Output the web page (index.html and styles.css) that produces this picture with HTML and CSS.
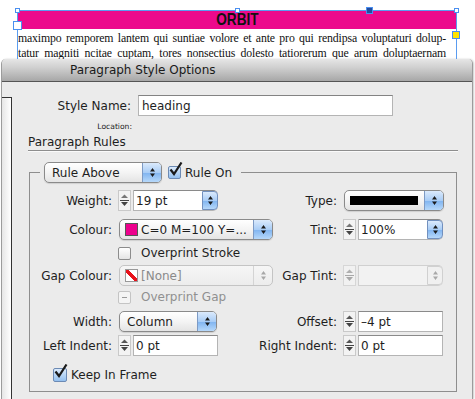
FILE: index.html
```html
<!DOCTYPE html>
<html lang="en">
<head>
<meta charset="utf-8">
<title>Paragraph Style Options</title>
<link rel="stylesheet" href="styles.css">
</head>
<body>
<div class="doc">
    <div class="frame">
        <div class="head"><span class="head-text">ORBIT</span></div>
        <p class="copy">
            <span class="line">maximpo remporem lantem qui suntiae volore et ante pro qui rendipsa voluptaturi dolup-</span>
            <span class="line">tatur magniti ncitae cuptam, tores nonsectius dolesto tatiorerum que arum doluptaernam</span>
        </p>
        <!-- selection handles sit on top of the frame -->
        <span class="handle h-tl"></span>
        <span class="handle h-tm"></span>
        <span class="handle h-tr"></span>
        <span class="handle h-in"></span>
        <span class="handle h-anchor"></span>
        <span class="handle h-out"></span>
    </div>
</div>

<div class="dialog">
    <div class="titlebar">Paragraph Style Options</div>
    <div class="dlg-body">
        <div class="list"></div>
        <div class="form">
            <div class="name-row">
                <span class="name-label">Style Name:</span>
                <div class="textfield">heading</div>
            </div>
            <div class="location">Location:</div>
            <div class="section">Paragraph Rules</div>

            <fieldset class="group">
                <legend class="legend">
                    <div class="popup rule-popup">
                        <span class="popup-text">Rule Above</span>
                        <span class="cap"><svg class="arrows" viewBox="0 0 7 11"><path d="M3.5 1 L6 4.5 H1Z M1 6.5 H6 L3.5 10Z"/></svg></span>
                    </div>
                    <span class="check on"><svg class="tick" viewBox="0 0 16 16"><path d="M2.5 7.5 L6 12 L13.5 0.5"/></svg></span>
                    <span class="check-text">Rule On</span>
                </legend>

                <div class="row r-weight">
                    <span class="lbl">Weight:</span>
                    <div class="spin-combo">
                        <svg class="stepper" viewBox="0 0 13 21"><rect x="0.5" y="0.5" width="12" height="20" fill="#f3f3f3" stroke="#c9c9c9"/><path d="M6.5 4.5 L10 8 H3Z" fill="#777"/><path d="M2 10.5 H11" stroke="#444"/><path d="M3 12 H10 L6.5 16Z" fill="#444"/></svg>
                        <div class="combo"><span class="field-text">19 pt</span><span class="cap small"><svg class="arrows" viewBox="0 0 7 11"><path d="M3.5 1 L6 4.5 H1Z M1 6.5 H6 L3.5 10Z"/></svg></span></div>
                    </div>
                    <span class="rlbl">Type:</span>
                    <div class="popup type-popup">
                        <span class="popup-text"><span class="stroke-swatch"></span></span>
                        <span class="cap"><svg class="arrows" viewBox="0 0 7 11"><path d="M3.5 1 L6 4.5 H1Z M1 6.5 H6 L3.5 10Z"/></svg></span>
                    </div>
                </div>

                <div class="row r-colour">
                    <span class="lbl">Colour:</span>
                    <div class="popup colour-popup">
                        <span class="swatch magenta"></span>
                        <span class="popup-text tight">C=0 M=100 Y=...</span>
                        <span class="cap"><svg class="arrows" viewBox="0 0 7 11"><path d="M3.5 1 L6 4.5 H1Z M1 6.5 H6 L3.5 10Z"/></svg></span>
                    </div>
                    <span class="rlbl">Tint:</span>
                    <div class="spin-combo">
                        <svg class="stepper" viewBox="0 0 13 21"><rect x="0.5" y="0.5" width="12" height="20" fill="#f3f3f3" stroke="#c9c9c9"/><path d="M6.5 4.5 L10 8 H3Z" fill="#777"/><path d="M2 10.5 H11" stroke="#444"/><path d="M3 12 H10 L6.5 16Z" fill="#444"/></svg>
                        <div class="combo"><span class="field-text">100%</span><span class="cap small"><svg class="arrows" viewBox="0 0 7 11"><path d="M3.5 1 L6 4.5 H1Z M1 6.5 H6 L3.5 10Z"/></svg></span></div>
                    </div>
                </div>

                <div class="row r-check r-stroke">
                    <span class="check off"></span>
                    <span class="check-text">Overprint Stroke</span>
                </div>

                <div class="row r-gap">
                    <span class="lbl">Gap Colour:</span>
                    <div class="popup colour-popup disabled">
                        <span class="swatch none"></span>
                        <span class="popup-text tight">[None]</span>
                        <span class="cap"><svg class="arrows" viewBox="0 0 7 11"><path d="M3.5 1 L6 4.5 H1Z M1 6.5 H6 L3.5 10Z"/></svg></span>
                    </div>
                    <span class="rlbl">Gap Tint:</span>
                    <div class="spin-combo disabled">
                        <svg class="stepper" viewBox="0 0 13 21"><rect x="0.5" y="0.5" width="12" height="20" fill="#f1f1f1" stroke="#d6d6d6"/><path d="M6.5 4.5 L10 8 H3Z" fill="#b0b0b0"/><path d="M2 10.5 H11" stroke="#a8a8a8"/><path d="M3 12 H10 L6.5 16Z" fill="#a8a8a8"/></svg>
                        <div class="combo"><span class="field-text"></span><span class="cap small"><svg class="arrows" viewBox="0 0 7 11"><path d="M3.5 1 L6 4.5 H1Z M1 6.5 H6 L3.5 10Z"/></svg></span></div>
                    </div>
                </div>

                <div class="row r-check r-ogap">
                    <span class="check mixed"><span class="dash"></span></span>
                    <span class="check-text dim">Overprint Gap</span>
                </div>

                <div class="row r-width">
                    <span class="lbl">Width:</span>
                    <div class="popup width-popup">
                        <span class="popup-text">Column</span>
                        <span class="cap"><svg class="arrows" viewBox="0 0 7 11"><path d="M3.5 1 L6 4.5 H1Z M1 6.5 H6 L3.5 10Z"/></svg></span>
                    </div>
                    <span class="rlbl">Offset:</span>
                    <div class="spin-combo">
                        <svg class="stepper" viewBox="0 0 13 21"><rect x="0.5" y="0.5" width="12" height="20" fill="#f3f3f3" stroke="#c9c9c9"/><path d="M6.5 4.5 L10 8 H3Z" fill="#555"/><path d="M2 10.5 H11" stroke="#444"/><path d="M3 12 H10 L6.5 16Z" fill="#444"/></svg>
                        <div class="field">–4 pt</div>
                    </div>
                </div>

                <div class="row r-indent">
                    <span class="lbl">Left Indent:</span>
                    <div class="spin-combo">
                        <svg class="stepper" viewBox="0 0 13 21"><rect x="0.5" y="0.5" width="12" height="20" fill="#f3f3f3" stroke="#c9c9c9"/><path d="M6.5 4.5 L10 8 H3Z" fill="#555"/><path d="M2 10.5 H11" stroke="#444"/><path d="M3 12 H10 L6.5 16Z" fill="#444"/></svg>
                        <div class="field">0 pt</div>
                    </div>
                    <span class="rlbl">Right Indent:</span>
                    <div class="spin-combo">
                        <svg class="stepper" viewBox="0 0 13 21"><rect x="0.5" y="0.5" width="12" height="20" fill="#f3f3f3" stroke="#c9c9c9"/><path d="M6.5 4.5 L10 8 H3Z" fill="#555"/><path d="M2 10.5 H11" stroke="#444"/><path d="M3 12 H10 L6.5 16Z" fill="#444"/></svg>
                        <div class="field">0 pt</div>
                    </div>
                </div>

                <div class="keep">
                    <span class="check on"><svg class="tick" viewBox="0 0 16 16"><path d="M2.5 7.5 L6 12 L13.5 0.5"/></svg></span>
                    <span class="check-text">Keep In Frame</span>
                </div>
            </fieldset>
        </div>
    </div>
</div>
</body>
</html>
```

FILE: styles.css
```css
* {
    box-sizing: border-box;
}
body {
    margin: 0;
    width: 475px;
    height: 399px;
    overflow: hidden;
    background: #fff;
    color: #1e1e1e;
    font-family: "DejaVu Sans", "Noto Sans", sans-serif;
    font-size: 12px;
}

/* document page behind the dialog */
.doc {
    height: 59px;
    overflow: hidden;
}
.frame {
    position: relative;
    margin: 10px 0 0 17px;
    width: 440px;
    height: 60px;
    border: 1px solid #5a9cf0;
    border-bottom: 0;
}
.head {
    height: 18px;
    background: #ec0a8c;
    text-align: center;
    line-height: 18px;
}
.head-text {
    display: inline-block;
    font-family: "Liberation Sans Narrow", "Liberation Sans", sans-serif;
    font-weight: bold;
    font-size: 17px;
    color: #111;
    transform: scaleX(0.8);
}
.copy {
    margin: 0;
    padding: 2px 10px 0 0;
    font-family: "Liberation Serif", serif;
    font-size: 11.8px;
    letter-spacing: -0.15px;
    line-height: 15px;
    color: #111;
}
.line {
    display: block;
    white-space: nowrap;
    text-align: justify;
    text-align-last: justify;
}
.handle {
    position: absolute;
    width: 5px;
    height: 5px;
    border: 1px solid #4a8ff0;
    background: #fff;
}
.h-tl { left: -3px; top: -3px; }
.h-tm { left: 217px; top: -3px; }
.h-tr { left: 436px; top: -3px; }
.h-in { left: -5px; top: 10px; width: 9px; height: 9px; }
.h-anchor { left: 348px; top: -4px; width: 7px; height: 7px; background: #244c9c; }
.h-out { left: 434px; top: 20px; width: 8px; height: 8px; background: #ffe400; }

/* dialog */
.dialog {
    margin-left: 1px;
    width: 472px;
    height: 340px;
    background: #ebebeb;
    border-left: 1px solid #9c9c9c;
    border-right: 1px solid #9c9c9c;
    border-radius: 5px 5px 0 0;
    box-shadow: 1px 0 2px rgba(0, 0, 0, 0.2);
    overflow: hidden;
}
.titlebar {
    height: 23px;
    line-height: 22px;
    padding-left: 68px;
    background: linear-gradient(#e6e6e6, #cfcfcf 40%, #a7a7a7);
    border-bottom: 1px solid #555;
    color: #1a1a1a;
}
.dlg-body {
    display: flex;
    height: 317px;
}
.list {
    width: 10px;
    margin-top: 15px;
    background: linear-gradient(90deg, #e6e6e6, #fff);
    border-top: 1px solid #333;
    border-right: 1px solid #333;
}
.form {
    padding: 13px 0 0 16px;
}
.name-row {
    display: flex;
    align-items: center;
}
.name-label {
    width: 103px;
    margin-right: 7px;
    text-align: right;
}
.textfield {
    width: 255px;
    height: 21px;
    padding-left: 3px;
    line-height: 20px;
    background: #fff;
    border: 1px solid #b4b4b4;
    border-top-color: #838383;
}
.location {
    width: 104px;
    margin-top: 6px;
    text-align: right;
    font-size: 7.6px;
    line-height: 10px;
}
.section {
    width: 430px;
    margin-top: 3px;
    line-height: 15px;
    border-bottom: 1px solid #8e8e8e;
    box-shadow: 0 1px 0 #fafafa;
}
.group {
    margin: 11px 0 0 1px;
    width: 428px;
    min-width: 0;
    padding: 7px 13px 8px 0;
    border: 1px solid #8e8e8e;
}
.legend {
    display: flex;
    align-items: center;
    margin-left: 10px;
    padding: 0 9px 0 4px;
}
.legend .check {
    margin-left: 6px;
}

/* aqua widgets */
.popup {
    display: flex;
    align-items: center;
    height: 21px;
    border: 1px solid #8a8a8a;
    border-radius: 5px;
    background: linear-gradient(#fff, #f4f4f4 50%, #e4e4e4);
    box-shadow: 0 1px 1px rgba(0, 0, 0, 0.12);
    overflow: hidden;
}
.popup-text {
    flex: 1;
    padding-left: 7px;
    white-space: nowrap;
    overflow: hidden;
}
.popup-text.tight {
    padding-left: 3px;
}
.cap {
    display: flex;
    align-items: center;
    justify-content: center;
    align-self: stretch;
    width: 19px;
    background: linear-gradient(#dbeafc, #a9cdf6 50%, #80b4f0 52%, #b6d8fa);
    border-left: 1px solid #7d9ac4;
}
.cap.small {
    width: 16px;
    border-radius: 0 4px 4px 0;
    border: 1px solid #7290be;
}
.arrows {
    width: 7px;
    height: 11px;
    fill: #1c1c1c;
}
.rule-popup {
    width: 118px;
}
.type-popup {
    width: 100px;
    margin-left: 1px;
}
.colour-popup {
    width: 154px;
    margin-left: 1px;
}
.width-popup {
    width: 98px;
    margin-left: 1px;
}
.stroke-swatch {
    display: block;
    width: 68px;
    height: 9px;
    margin-left: -2px;
    background: #000;
}
.swatch {
    width: 13px;
    height: 13px;
    margin-left: 5px;
    border: 1px solid #555;
}
.magenta {
    background: #ec008c;
}
.none {
    border-color: #999;
    background: linear-gradient(to top right, #fff 40%, #e8121b 40%, #e8121b 60%, #fff 60%);
}
.popup.disabled {
    border-color: #c4c4c4;
    background: linear-gradient(#f6f6f6, #ececec);
    box-shadow: none;
    color: #8a8a8a;
}
.popup.disabled .cap {
    background: none;
    border-left-color: #d4d4d4;
}
.disabled .arrows {
    fill: #a8a8a8;
}

.spin-combo {
    display: flex;
    align-items: center;
    gap: 2px;
    width: 100px;
}
.stepper {
    width: 13px;
    height: 21px;
    flex: none;
}
.combo,
.field {
    display: flex;
    align-items: center;
    width: 85px;
    height: 21px;
    background: #fff;
    border: 1px solid #b4b4b4;
    border-top-color: #8a8a8a;
}
.combo {
    border-right: 0;
    border-radius: 0 5px 5px 0;
}
.field {
    padding-left: 2px;
}
.field-text {
    flex: 1;
    padding-left: 2px;
}
.spin-combo.disabled .combo {
    background: #f2f2f2;
    border-color: #d0d0d0;
}
.spin-combo.disabled .cap {
    background: #f0f0f0;
    border-color: #d0d0d0;
}

.check {
    position: relative;
    display: inline-block;
    flex: none;
    width: 13px;
    height: 13px;
    border: 1px solid #6c8ab4;
    border-radius: 2px;
    background: linear-gradient(#dcebfc, #94c0ef);
}
.check.off {
    border-color: #8c8c8c;
    background: linear-gradient(#fff, #e4e4e4);
}
.check.mixed {
    border-color: #c4c4c4;
    background: #f4f4f4;
}
.dash {
    position: absolute;
    left: 3px;
    top: 5px;
    width: 5px;
    height: 1px;
    background: #999;
}
.tick {
    position: absolute;
    left: -1px;
    top: -5px;
    width: 16px;
    height: 16px;
    fill: none;
    stroke: #1b1b1b;
    stroke-width: 2.2;
}
.check-text {
    margin-left: 4px;
    white-space: nowrap;
}
.dim {
    color: #909090;
}

/* form rows inside the rule group */
.row {
    display: grid;
    grid-template-columns: 82px 100px 26px 81px 100px;
    column-gap: 6px;
    align-items: center;
    height: 21px;
}
.lbl {
    text-align: right;
    white-space: nowrap;
}
.rlbl {
    grid-column: 4;
    text-align: right;
    white-space: nowrap;
}
.r-colour .colour-popup,
.r-gap .colour-popup {
    grid-column: 2 / 5;
    grid-row: 1;
}
.r-colour .rlbl,
.r-gap .rlbl {
    grid-row: 1;
}
.r-check {
    display: flex;
    height: 14px;
    padding-left: 88px;
}
.r-colour { margin-top: 8px; }
.r-stroke { margin-top: 6px; }
.r-gap { margin-top: 5px; }
.r-ogap { margin-top: 4px; }
.r-width { margin-top: 7px; }
.r-indent { margin-top: 3px; }
.keep {
    display: flex;
    align-items: center;
    height: 16px;
    margin: 11px 0 0 23px;
}
.keep .check {
    width: 14px;
    height: 14px;
}
```
